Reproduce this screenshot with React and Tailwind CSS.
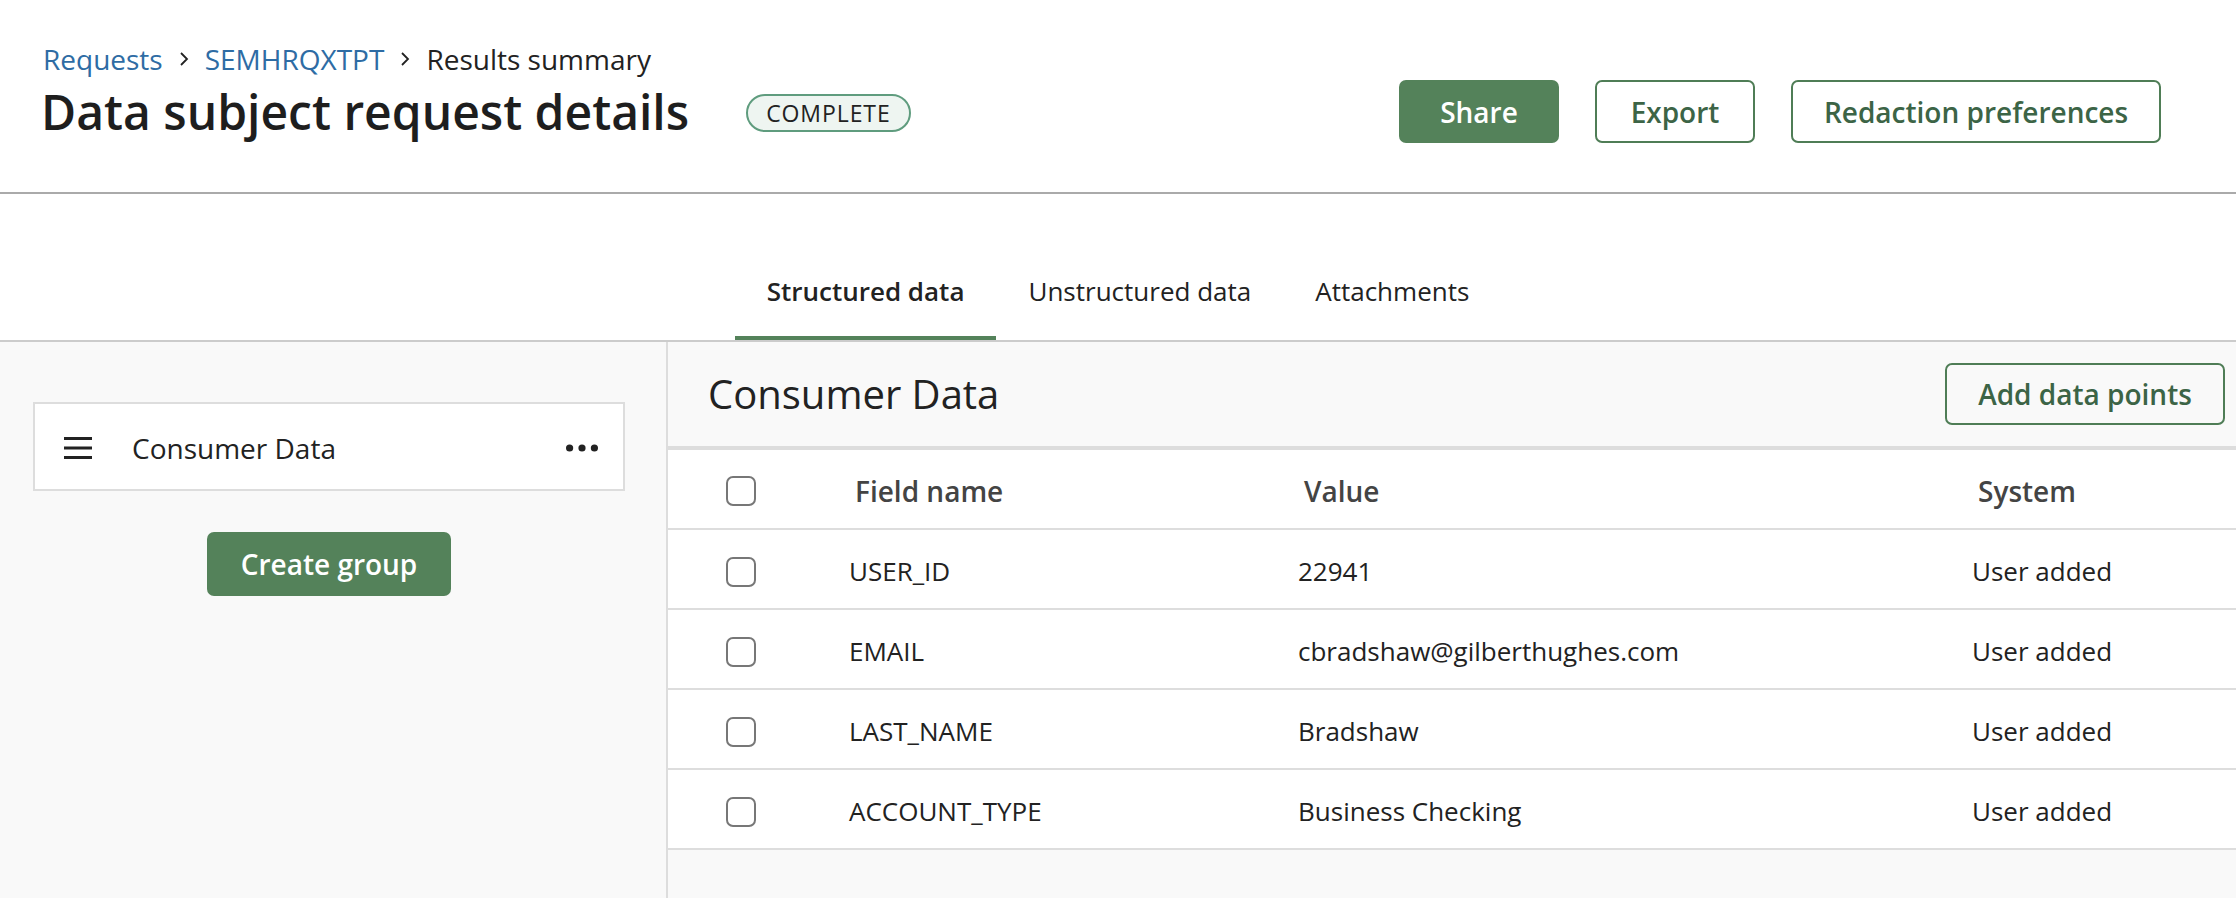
import { useState } from 'react';

const rows = [
  { field: 'USER_ID', value: '22941', system: 'User added' },
  { field: 'EMAIL', value: 'cbradshaw@gilberthughes.com', system: 'User added' },
  { field: 'LAST_NAME', value: 'Bradshaw', system: 'User added' },
  { field: 'ACCOUNT_TYPE', value: 'Business Checking', system: 'User added' },
];

const tabs = ['Structured data', 'Unstructured data', 'Attachments'];

function Chevron() {
  return (
    <svg width="10" height="16" viewBox="0 0 10 16" className="mx-[16px]">
      <polyline points="2,2 8,8 2,14" fill="none" stroke="#222" strokeWidth="1.8" />
    </svg>
  );
}

function Checkbox() {
  return <span className="block w-[30px] h-[30px] rounded-[7px] border-2 border-[#777] bg-white" />;
}

export default function App() {
  const [active, setActive] = useState(0);

  return (
    <div className="w-full h-[898px] bg-white font-['Open_Sans',sans-serif] text-[#222] flex flex-col overflow-hidden">
      {/* page header */}
      <header className="h-[194px] shrink-0 flex justify-between pl-[41px] pr-[75px] pt-[39px] border-b-2 border-[#aaa]">
        <div>
          <nav className="flex items-center text-[28px] leading-[40px] pl-[2px]">
            <a href="#" className="text-[#2e6ca4]">Requests</a>
            <Chevron />
            <a href="#" className="text-[#2e6ca4]">SEMHRQXTPT</a>
            <Chevron />
            <span>Results summary</span>
          </nav>
          <div className="flex items-center mt-[5px]">
            <h1 className="text-[48px] leading-[56px] font-semibold text-[#1e1e1e]">Data subject request details</h1>
            <span className="ml-[57px] mt-[2px] h-[38px] px-[18px] flex items-center rounded-full border-2 border-[#5f9c7e] bg-[#eef5f1] text-[23px] tracking-[0.04em] text-[#222]">
              COMPLETE
            </span>
          </div>
        </div>
        <div className="flex gap-[36px] mt-[41px]">
          <button className="w-[160px] h-[63px] rounded-[7px] bg-[#54825a] text-white text-[28px] font-semibold">Share</button>
          <button className="w-[160px] h-[63px] rounded-[7px] border-2 border-[#4f7d56] text-[#3c6446] text-[28px] font-semibold">Export</button>
          <button className="w-[370px] h-[63px] rounded-[7px] border-2 border-[#4f7d56] text-[#3c6446] text-[28px] font-semibold">Redaction preferences</button>
        </div>
      </header>

      {/* tabs */}
      <div className="h-[148px] shrink-0 flex justify-center items-end border-b-2 border-[#ccc]">
        {tabs.map((t, i) => (
          <button
            key={t}
            onClick={() => setActive(i)}
            className={
              i === active
                ? 'px-[32px] pb-[27px] text-[26px] leading-[36px] font-semibold border-b-4 border-[#54825a]'
                : 'px-[32px] pb-[27px] text-[26px] leading-[36px] border-b-4 border-transparent'
            }
          >
            {t}
          </button>
        ))}
      </div>

      <div className="flex flex-1 min-h-0">
        {/* groups sidebar */}
        <aside className="w-[668px] shrink-0 bg-[#f9f9f9] border-r-2 border-[#ddd] px-[33px] pt-[60px]">
          <div className="w-[592px] h-[89px] bg-white border-2 border-[#ddd] flex items-center pl-[29px] pr-[25px] pt-[2px]">
            <svg width="28" height="22" viewBox="0 0 28 22">
              <rect x="0" y="0" width="28" height="3" fill="#222" />
              <rect x="0" y="9.5" width="28" height="3" fill="#222" />
              <rect x="0" y="19" width="28" height="3" fill="#222" />
            </svg>
            <span className="ml-[40px] text-[28px] flex-1">Consumer Data</span>
            <svg width="32" height="8" viewBox="0 0 32 8">
              <circle cx="3.6" cy="4" r="3.6" fill="#222" />
              <circle cx="16" cy="4" r="3.6" fill="#222" />
              <circle cx="28.4" cy="4" r="3.6" fill="#222" />
            </svg>
          </div>
          <div className="w-[592px] flex justify-center mt-[41px]">
            <button className="w-[244px] h-[64px] rounded-[7px] bg-[#54825a] text-white text-[28px] font-semibold">Create group</button>
          </div>
        </aside>

        {/* group contents */}
        <main className="flex-1 bg-[#f9f9f9]">
          <div className="h-[108px] flex items-center justify-between pl-[40px] pr-[11px] border-b-4 border-[#ddd]">
            <h2 className="text-[40px]">Consumer Data</h2>
            <button className="w-[280px] h-[62px] rounded-[7px] border-2 border-[#4f7d56] text-[#3c6446] text-[28px] font-semibold">Add data points</button>
          </div>
          <div className="grid grid-cols-[181px_449px_674px_1fr] items-center h-[80px] bg-white border-b-2 border-[#ddd] pt-[4px] text-[28px] font-semibold text-[#444]">
            <div className="pl-[58px]"><Checkbox /></div>
            <div className="pl-[6px]">Field name</div>
            <div className="pl-[6px]">Value</div>
            <div className="pl-[6px]">System</div>
          </div>
          {rows.map((r) => (
            <div key={r.field} className="grid grid-cols-[181px_449px_674px_1fr] items-center h-[80px] bg-white border-b-2 border-[#ddd] pt-[5px] text-[26px]">
              <div className="pl-[58px]"><Checkbox /></div>
              <div>{r.field}</div>
              <div>{r.value}</div>
              <div>{r.system}</div>
            </div>
          ))}
        </main>
      </div>
    </div>
  );
}
